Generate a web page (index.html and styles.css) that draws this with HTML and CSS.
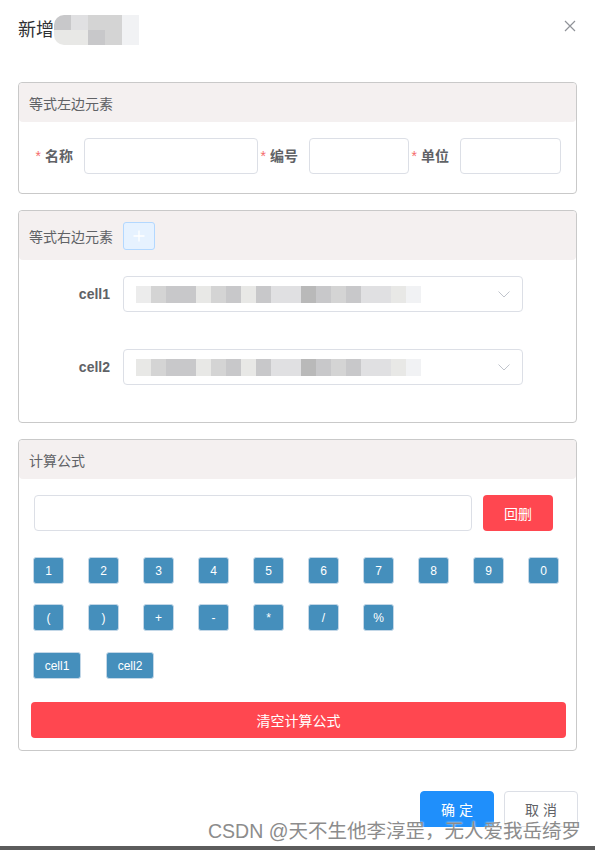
FILE: index.html
```html
<!DOCTYPE html>
<html lang="zh-CN">
<head>
  <meta charset="UTF-8">
  <meta name="viewport" content="width=device-width, initial-scale=1.0">
  <title>新增</title>
  <link rel="stylesheet" href="styles.css">
</head>
<body>
  <div class="dialog">
    <div class="dialog-header">
      <div class="dialog-title">
        新增
        <span class="mosaic title-mosaic">
          <i class="s3"></i><i class="s5"></i><i class="s4"></i><i class="s4"></i><i class="s7"></i>
          <i class="s6"></i><i class="s6"></i><i class="s3"></i><i class="s4"></i><i class="s7"></i>
        </span>
      </div>
      <button class="dialog-close" title="关闭">
        <svg width="12" height="12" viewBox="0 0 12 12"><path d="M1 1L11 11M11 1L1 11" stroke="#909399" stroke-width="1.2" fill="none"/></svg>
      </button>
    </div>

    <div class="dialog-body">
      <!-- 等式左边 -->
      <section class="panel">
        <div class="panel-head">等式左边元素</div>
        <div class="panel-body left-body">
          <label class="form-label required">名称</label>
          <input class="form-input w-name" type="text">
          <label class="form-label required">编号</label>
          <input class="form-input w-code" type="text">
          <label class="form-label required">单位</label>
          <input class="form-input w-unit" type="text">
        </div>
      </section>

      <!-- 等式右边 -->
      <section class="panel">
        <div class="panel-head tall">
          等式右边元素
          <button class="add-btn">
            <svg width="12" height="12" viewBox="0 0 12 12"><path d="M6 0.5V11.5M0.5 6H11.5" stroke="#fff" stroke-width="1.3" fill="none"/></svg>
          </button>
        </div>
        <div class="panel-body right-body">
          <div class="cell-row">
            <label class="cell-label">cell1</label>
            <div class="select">
              <span class="mosaic select-mosaic">
                <i class="s2"></i><i class="s4"></i><i class="s3"></i><i class="s3"></i><i class="s6"></i><i class="s4"></i><i class="s3"></i><i class="s6"></i><i class="s3"></i><i class="s5"></i><i class="s5"></i><i class="s1"></i><i class="s3"></i><i class="s4"></i><i class="s3"></i><i class="s5"></i><i class="s5"></i><i class="s6"></i><i class="s7"></i>
              </span>
              <svg class="arrow" width="12" height="7" viewBox="0 0 12 7"><path d="M0.5 0.5L6 6L11.5 0.5" stroke="#c0c4cc" stroke-width="1" fill="none"/></svg>
            </div>
          </div>
          <div class="cell-row">
            <label class="cell-label">cell2</label>
            <div class="select">
              <span class="mosaic select-mosaic">
                <i class="s6"></i><i class="s4"></i><i class="s3"></i><i class="s3"></i><i class="s6"></i><i class="s4"></i><i class="s3"></i><i class="s6"></i><i class="s3"></i><i class="s5"></i><i class="s5"></i><i class="s1"></i><i class="s3"></i><i class="s4"></i><i class="s3"></i><i class="s5"></i><i class="s5"></i><i class="s6"></i><i class="s7"></i>
              </span>
              <svg class="arrow" width="12" height="7" viewBox="0 0 12 7"><path d="M0.5 0.5L6 6L11.5 0.5" stroke="#c0c4cc" stroke-width="1" fill="none"/></svg>
            </div>
          </div>
        </div>
      </section>

      <!-- 计算公式 -->
      <section class="panel last">
        <div class="panel-head">计算公式</div>
        <div class="panel-body formula-body">
          <div class="formula-row">
            <input class="form-input w-formula" type="text">
            <button class="btn-danger back-btn">回删</button>
          </div>
          <div class="key-row">
            <button class="key">1</button><button class="key">2</button><button class="key">3</button><button class="key">4</button><button class="key">5</button>
            <button class="key">6</button><button class="key">7</button><button class="key">8</button><button class="key">9</button><button class="key">0</button>
          </div>
          <div class="key-row">
            <button class="key">(</button><button class="key">)</button><button class="key">+</button><button class="key">-</button>
            <button class="key">*</button><button class="key">/</button><button class="key">%</button>
          </div>
          <div class="key-row cells">
            <button class="key wide">cell1</button><button class="key wide">cell2</button>
          </div>
          <button class="btn-danger clear-btn">清空计算公式</button>
        </div>
      </section>
    </div>

    <div class="dialog-footer">
      <button class="btn btn-primary">确 定</button>
      <button class="btn btn-default">取 消</button>
    </div>
  </div>

  <div class="watermark">CSDN @天不生他李淳罡，无人爱我岳绮罗</div>
  <div class="screen-edge"></div>
</body>
</html>
```

FILE: styles.css
```css
body {
  margin: 0;
  height: 850px;
  overflow: hidden;
  position: relative;
  background: #fff;
  color: #606266;
  font-family: "Liberation Sans", "Noto Sans CJK SC", sans-serif;
  font-size: 14px;
}
button {
  font-family: inherit;
  cursor: pointer;
}

/* 标题栏 */
.dialog-header {
  display: flex;
  justify-content: space-between;
  align-items: center;
  height: 30px;
  padding: 15px 19px 0 18px;
}
.dialog-title {
  display: flex;
  align-items: center;
  font-size: 18px;
  line-height: 24px;
  color: #303133;
}
.dialog-close {
  align-self: flex-start;
  margin-top: 5px;
  width: 12px;
  height: 12px;
  padding: 0;
  border: none;
  background: none;
  display: flex;
}

/* 打码 */
.mosaic {
  display: inline-grid;
}
.mosaic i {
  display: block;
}
.title-mosaic {
  grid-template-columns: repeat(5, 17px);
  grid-auto-rows: 15px;
  border-radius: 10px 0 0 10px;
  overflow: hidden;
}
.select-mosaic {
  grid-template-columns: repeat(19, 15px);
  grid-auto-rows: 17px;
}
.s1 { background: #b9b9b9; }
.s2 { background: #ececec; }
.s3 { background: #c8c8ca; }
.s4 { background: #d4d4d4; }
.s5 { background: #e0e0e2; }
.s6 { background: #e8e8e6; }
.s7 { background: #f1f2f4; }

/* 面板 */
.dialog-body {
  padding-top: 37px;
}
.panel {
  margin: 0 18px 16px;
  border: 1px solid #c9c9c9;
  border-radius: 4px;
}
.panel.last {
  margin-bottom: 0;
}
.panel-head {
  display: flex;
  align-items: center;
  height: 39px;
  padding-left: 10px;
  background: #f4f0f0;
  border-radius: 4px;
  font-size: 14px;
  color: #606266;
}
.panel-head.tall {
  height: 49px;
}
.add-btn {
  display: flex;
  align-items: center;
  justify-content: center;
  width: 32px;
  height: 28px;
  margin-left: 10px;
  padding: 0;
  background: #e6f2ff;
  border: 1px solid #b3d8ff;
  border-radius: 3px;
}

/* 左边元素 */
.left-body {
  display: flex;
  padding: 16px 0 19px 14px;
}
.form-label {
  width: 51px;
  padding-right: 11px;
  box-sizing: border-box;
  text-align: right;
  font-weight: bold;
  line-height: 36px;
  white-space: nowrap;
}
.form-label.required::before {
  content: "*";
  color: #f56c6c;
  margin-right: 4px;
  font-weight: normal;
}
.form-input {
  height: 36px;
  box-sizing: border-box;
  padding: 0 12px;
  border: 1px solid #dcdfe6;
  border-radius: 4px;
  outline: none;
}
.w-name { width: 174px; }
.w-code { width: 100px; }
.w-unit { width: 101px; }

/* 右边元素 */
.right-body {
  padding: 16px 0 37px;
}
.cell-row {
  display: flex;
}
.cell-row + .cell-row {
  margin-top: 37px;
}
.cell-label {
  width: 104px;
  padding-right: 13px;
  box-sizing: border-box;
  text-align: right;
  font-weight: bold;
  line-height: 36px;
}
.select {
  display: flex;
  align-items: center;
  justify-content: space-between;
  width: 400px;
  height: 36px;
  box-sizing: border-box;
  padding: 0 12px;
  border: 1px solid #dcdfe6;
  border-radius: 4px;
}

/* 计算公式 */
.formula-body {
  padding: 16px 10px 12px 12px;
}
.formula-row {
  display: flex;
  margin-left: 3px;
}
.w-formula {
  width: 438px;
}
.btn-danger {
  background: #ff4750;
  color: #fff;
  border: none;
  border-radius: 4px;
  font-size: 14px;
}
.back-btn {
  width: 70px;
  height: 36px;
  margin-left: 11px;
}
.key-row {
  display: flex;
  gap: 24px;
  margin: 20px 0 0 2px;
}
.formula-row + .key-row {
  margin-top: 26px;
}
.key-row.cells {
  gap: 25px;
  margin-top: 21px;
}
.key {
  width: 31px;
  height: 27px;
  padding: 0;
  background: #458fbc;
  color: #fff;
  border: 1px solid #c3d7e7;
  border-radius: 3px;
  font-size: 12px;
}
.key.wide {
  width: 48px;
}
.clear-btn {
  display: block;
  width: 100%;
  height: 36px;
  margin-top: 23px;
}

/* 底部按钮 */
.dialog-footer {
  display: flex;
  justify-content: flex-end;
  gap: 10px;
  padding: 40px 17px 0;
}
.btn {
  width: 74px;
  height: 36px;
  border-radius: 4px;
  font-size: 14px;
}
.btn-primary {
  background: #1f8ffb;
  border: 1px solid #1f8ffb;
  color: #fff;
}
.btn-default {
  background: #fff;
  border: 1px solid #dcdfe6;
  color: #606266;
}

.watermark {
  position: absolute;
  top: 819px;
  right: 14px;
  font-size: 19.5px;
  line-height: 24px;
  color: #8c8c8c;
  text-shadow: 0 0 2px #fff;
  white-space: nowrap;
}
.screen-edge {
  position: absolute;
  left: 0;
  right: 0;
  bottom: 0;
  height: 4px;
  background: #5c5c5c;
}
```
